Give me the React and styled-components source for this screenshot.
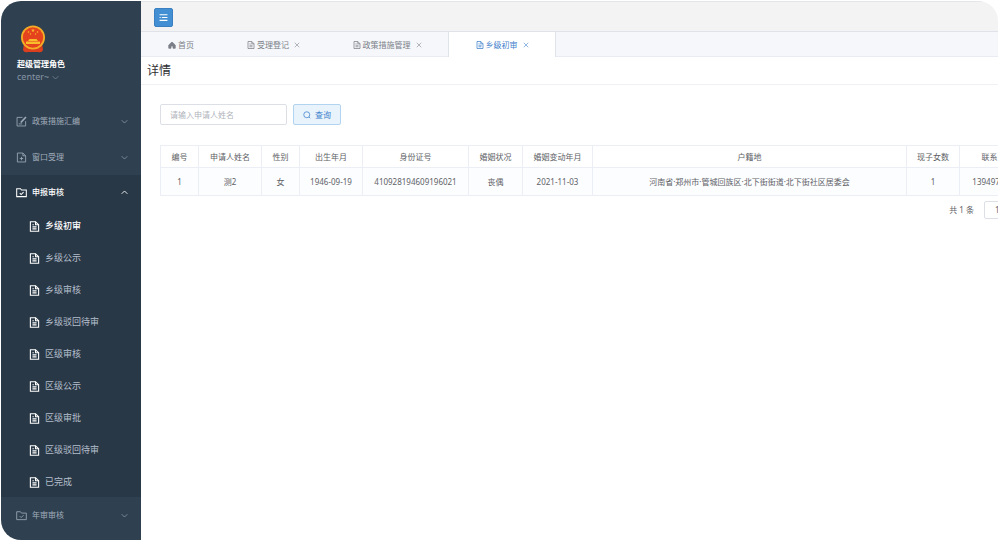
import React from 'react'
import styled, { createGlobalStyle } from 'styled-components'

const GlobalStyle = createGlobalStyle`
  * {
    box-sizing: border-box;
  }
  body {
    margin: 0;
    background: #fff;
    color: #606266;
    font-family: "Noto Sans", "Open Sans", "Noto Sans CJK SC", sans-serif;
    font-size: 8px;
    line-height: 12px;
  }
  button, input, select {
    font: inherit;
    margin: 0;
  }
  a {
    color: inherit;
    text-decoration: none;
  }
`

const menuTop = [
    { label: '政策措施汇编', icon: 'edit' },
    { label: '窗口受理', icon: 'add' },
]

const subMenu = [
    '乡级初审',
    '乡级公示',
    '乡级审核',
    '乡级驳回待审',
    '区级审核',
    '区级公示',
    '区级审批',
    '区级驳回待审',
    '已完成',
]

const tabs = [
    { label: '首页', icon: 'home', width: 80 },
    { label: '受理登记', icon: 'doc', width: 105, closable: true },
    { label: '政策措施管理', icon: 'doc', width: 122, closable: true },
    { label: '乡级初审', icon: 'doc', width: 108, closable: true, active: true },
]

const columns = [
    { label: '编号', width: 38 },
    { label: '申请人姓名', width: 63 },
    { label: '性别', width: 38 },
    { label: '出生年月', width: 63 },
    { label: '身份证号', width: 106 },
    { label: '婚姻状况', width: 54 },
    { label: '婚姻变动年月', width: 70 },
    { label: '户籍地', width: 314 },
    { label: '现子女数', width: 53 },
    { label: '联系电话', width: 76 },
]

const rows = [
    ['1', '测2', '女', '1946-09-19', '410928194609196021', '丧偶', '2021-11-03',
        '河南省·郑州市·管城回族区·北下街街道·北下街社区居委会', '1', '13949700000'],
]

const iconPaths = {
    edit: <><path d="M9.500 2H1.500V14.500H14V7.500" /><path d="M14.500 1.500L7 9.500" strokeWidth="2.4" /><path d="M4 11.500H9" /></>,
    add: <><path d="M2 1.500H10L14 5.500V14.500H2Z" /><path d="M10 1.500V5.500H14M8 7V12M5.500 9.500H10.500" /></>,
    folder: <><path d="M1 2.500H6.500L8 4.500H15V14H1Z" /><path d="M5.500 9L7.500 11L11 7.500" /></>,
    doc: <><path d="M2 1H9.500L14 5.500V15H2Z" /><path d="M9.500 1V5.500H14M5 5.500H7M5 8.500H11M5 11.500H11" /></>,
    home: <path d="M8 2L1.500 8V14.500H6V10H10V14.500H14.500V8Z" fill="currentColor" />,
    search: <><circle cx="7.500" cy="7.500" r="6" /><path d="M12 12L14.500 14.500" /></>,
    close: <path d="M2 2L14 14M14 2L2 14" />,
    down: <path d="M1.500 5L8 11.500L14.500 5" />,
    up: <path d="M1.500 11L8 4.500L14.500 11" />,
    fold: <path d="M1 3H15M1 8H3M5 8H15M1 13H15" />,
}

function Icon({ name, size = 10, weight = 1.5 }) {
    return (
        <svg width={size} height={size} viewBox="0 0 16 16" fill="none" stroke="currentColor" strokeWidth={weight} aria-hidden="true">
            {iconPaths[name]}
        </svg>
    )
}

function Emblem() {
    return (
        <svg width="26" height="28" viewBox="0 0 26 28" aria-hidden="true">
            <path d="M4 18H22L23 25Q22 28 18 27H8Q4 28 3 25Z" fill="#dc3f1e" />
            <circle cx="13" cy="12.500" r="12" fill="#f5ad26" />
            <circle cx="13" cy="12.500" r="10.200" fill="#e5431d" />
            <g fill="#f9bd2c">
                <path d="M13 3.500L13.500 4.800H14.800L13.800 5.700L14.200 7L13 6.200L11.800 7L12.200 5.700L11.200 4.800H12.500Z" />
                <circle cx="8.500" cy="7" r="0.800" />
                <circle cx="10.500" cy="9" r="0.700" />
                <circle cx="15.500" cy="9" r="0.700" />
                <circle cx="17.500" cy="7" r="0.800" />
                <path d="M9.500 14H16.500L18 16H8Z" />
                <path d="M6 16.500H20V19H6Z" />
            </g>
        </svg>
    )
}

function Sidebar() {
    return (
        <Side>
            <Profile>
                <Emblem />
                <UserName>超级管理角色</UserName>
                <UserMenu type="button">center~ <Icon name="down" size={7} /></UserMenu>
            </Profile>
            <nav>
                {menuTop.map((item) => (
                    <MenuButton key={item.label} type="button">
                        <Icon name={item.icon} size={11} weight={1.2} />
                        <span>{item.label}</span>
                        <Icon name="down" size={7} />
                    </MenuButton>
                ))}
                <OpenGroup>
                    <MenuButton type="button" $open aria-expanded="true">
                        <Icon name="folder" size={11} />
                        <span>申报审核</span>
                        <Icon name="up" size={7} weight={2} />
                    </MenuButton>
                    {subMenu.map((label, i) => (
                        <SubLink key={label} href="#" $active={i === 0}>
                            <Icon name="doc" size={11} weight={1.6} />
                            <span>{label}</span>
                        </SubLink>
                    ))}
                </OpenGroup>
                <MenuButton type="button">
                    <Icon name="folder" size={11} weight={1.2} />
                    <span>年审审核</span>
                    <Icon name="down" size={7} />
                </MenuButton>
            </nav>
        </Side>
    )
}

function App() {
    return (
        <Shell>
            <GlobalStyle />
            <Sidebar />
            <Main>
                <TopBar>
                    <FoldButton type="button" aria-label="折叠菜单"><Icon name="fold" size={9} weight={2} /></FoldButton>
                </TopBar>
                <TabBar>
                    {tabs.map((tab) => (
                        <Tab key={tab.label} $width={tab.width} $active={tab.active}>
                            <TabLink href="#"><Icon name={tab.icon} size={8} /> {tab.label}</TabLink>
                            {tab.closable && (
                                <CloseButton type="button" aria-label="关闭"><Icon name="close" size={6} /></CloseButton>
                            )}
                        </Tab>
                    ))}
                </TabBar>
                <PageTitle>详情</PageTitle>
                <Content>
                    <SearchForm onSubmit={(e) => e.preventDefault()}>
                        <NameInput aria-label="申请人姓名" placeholder="请输入申请人姓名" />
                        <QueryButton type="submit"><Icon name="search" size={8} /> 查询</QueryButton>
                    </SearchForm>
                    <Table>
                        <colgroup>
                            {columns.map((col) => <Col key={col.label} $width={col.width} />)}
                        </colgroup>
                        <thead>
                            <tr>{columns.map((col) => <Th key={col.label}>{col.label}</Th>)}</tr>
                        </thead>
                        <tbody>
                            {rows.map((row) => (
                                <tr key={row[0]}>{row.map((cell, i) => <Td key={columns[i].label}>{cell}</Td>)}</tr>
                            ))}
                        </tbody>
                    </Table>
                    <Pagination>
                        <span>共 1 条</span>
                        <PageSize aria-label="每页条数" defaultValue="10">
                            <option value="10">10条/页</option>
                            <option value="20">20条/页</option>
                        </PageSize>
                    </Pagination>
                </Content>
            </Main>
        </Shell>
    )
}

export default App


const Shell = styled.div`
  display: flex;
  min-height: calc(100vh - 2px);
  margin: 1px 0 1px 1px;
  border-radius: 20px;
  overflow: hidden;
`
const Side = styled.aside`
  flex: 0 0 140px;
  background: #2f4050;
  color: #a0acba;
`
const Profile = styled.div`
  display: flex;
  flex-direction: column;
  align-items: flex-start;
  height: 102px;
  padding: 24px 16px 0;
  > svg {
    margin-left: 3px;
  }
`
const UserName = styled.strong`
  margin-top: 5px;
  color: #fff;
  font-weight: 700;
`
const UserMenu = styled.button`
  display: flex;
  align-items: center;
  gap: 3px;
  padding: 0;
  border: 0;
  background: none;
  color: #8795a5;
  font-size: 9px;
  line-height: 14px;
`
const MenuButton = styled.button`
  display: flex;
  align-items: center;
  gap: 5px;
  width: 100%;
  height: ${(p) => (p.$open ? '34px' : '36px')};
  padding: 0 13px 0 15px;
  border: 0;
  background: none;
  color: ${(p) => (p.$open ? '#fff' : '#a0acba')};
  font-weight: ${(p) => (p.$open ? 500 : 400)};
  text-align: left;
  span {
    flex: 1;
  }
`
const OpenGroup = styled.div`
  background: #293846;
`
const SubLink = styled.a`
  display: flex;
  align-items: center;
  gap: 5px;
  height: 32px;
  padding: 2px 0 0 28px;
  color: #fff;
  font-size: 9px;
  span {
    color: ${(p) => (p.$active ? '#fff' : '#b4bfcc')};
    font-weight: ${(p) => (p.$active ? 500 : 400)};
  }
`
const Main = styled.main`
  flex: 1;
  min-width: 0;
  overflow: hidden;
`
const TopBar = styled.header`
  display: flex;
  align-items: center;
  height: 31px;
  padding: 2px 13px 0;
  border-top: 1px solid #e4e5e8;
  border-bottom: 1px solid #dfe2e8;
  background: #f3f3f4;
`
const FoldButton = styled.button`
  display: flex;
  align-items: center;
  justify-content: center;
  width: 19px;
  height: 19px;
  padding: 0;
  border: 1px solid #3a80c0;
  border-radius: 2px;
  background: #428fd3;
  color: #fff;
`
const TabBar = styled.div`
  display: flex;
  height: 25px;
  background: #f5f7fb;
  box-shadow: inset 0 -1px #e8ebf1;
`
const Tab = styled.div`
  display: flex;
  align-items: center;
  justify-content: center;
  gap: 5px;
  width: ${(p) => p.$width}px;
  border: solid ${(p) => (p.$active ? '#dfe3ea' : 'transparent')};
  border-width: 0 1px;
  background: ${(p) => (p.$active ? '#fff' : 'transparent')};
  color: ${(p) => (p.$active ? '#3f80cc' : '#7b7f87')};
`
const TabLink = styled.a`
  display: flex;
  align-items: center;
  gap: 2px;
`
const CloseButton = styled.button`
  display: flex;
  padding: 0;
  border: 0;
  background: none;
  color: inherit;
`
const PageTitle = styled.h1`
  height: 28px;
  margin: 0;
  padding-left: 6px;
  border-bottom: 1px solid #f0f1f4;
  color: #303133;
  font-size: 12px;
  font-weight: 400;
  line-height: 28px;
`
const Content = styled.section`
  width: max-content;
  padding: 19px;
`
const SearchForm = styled.form`
  display: flex;
  gap: 6px;
  margin-bottom: 20px;
`
const NameInput = styled.input`
  width: 127px;
  height: 21px;
  padding: 0 9px;
  border: 1px solid #dcdfe6;
  border-radius: 2px;
  background: #fff;
  color: #606266;
  outline: none;
  &::placeholder {
    color: #b0b4bc;
  }
`
const QueryButton = styled.button`
  display: flex;
  align-items: center;
  justify-content: center;
  gap: 4px;
  width: 48px;
  height: 21px;
  padding: 0;
  border: 1px solid #b3d4f0;
  border-radius: 2px;
  background: #e8f3fc;
  color: #3f80cc;
`
const Table = styled.table`
  table-layout: fixed;
  width: 875px;
  border-collapse: collapse;
  text-align: center;
`
const Col = styled.col`
  width: ${(p) => p.$width}px;
`
const Th = styled.th`
  height: 22px;
  padding: 0;
  border: 1px solid #ebeff5;
  font-weight: 400;
`
const Td = styled.td`
  height: 28px;
  padding: 0;
  border: 1px solid #ebeff5;
  background: #fcfdff;
`
const Pagination = styled.div`
  display: flex;
  align-items: center;
  justify-content: flex-end;
  gap: 10px;
  margin-top: 5px;
`
const PageSize = styled.select`
  appearance: none;
  width: 52px;
  height: 18px;
  padding: 0 10px;
  border: 1px solid #dcdfe6;
  border-radius: 2px;
  background: #fff;
  color: #606266;
`
